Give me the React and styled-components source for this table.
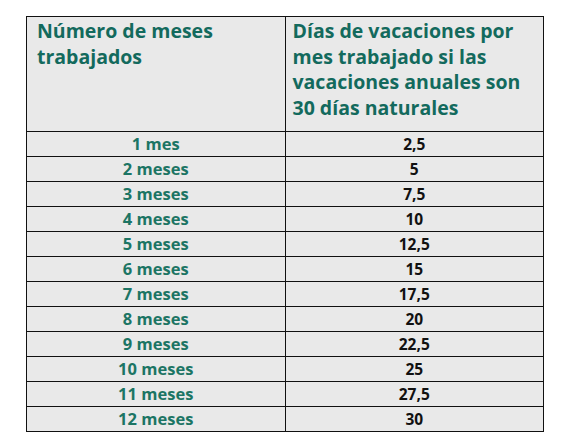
import React from 'react'
import styled, { createGlobalStyle } from 'styled-components'

const Global = createGlobalStyle`
  body {
    margin: 0;
    background: #ffffff;
    font-family: "Open Sans", "Noto Sans", sans-serif;
  }
`

const Page = styled.div`
  padding: 16px 0 0 26px;
`

const Table = styled.table`
  border-collapse: collapse;
  width: 518px;
  background: #e9e9e9;
  border: 1.5px solid #111;
`

const HeadCell = styled.th`
  width: ${props => props.w}px;
  height: 115px;
  box-sizing: border-box;
  padding: 1px 6px 0 ${props => props.pl}px;
  vertical-align: top;
  text-align: left;
  font-weight: 700;
  font-size: 19.5px;
  line-height: 25.6px;
  color: #136a5d;
  border: 1px solid #111;
`

const Cell = styled.td`
  height: 25px;
  box-sizing: border-box;
  padding: 0;
  text-align: center;
  vertical-align: middle;
  font-weight: 700;
  font-size: ${props => (props.num ? '15.5px' : '16.5px')};
  line-height: 20px;
  color: ${props => (props.num ? '#111' : '#1c7564')};
  border: 1px solid #111;
`

const rows = [
  ['1 mes', '2,5'],
  ['2 meses', '5'],
  ['3 meses', '7,5'],
  ['4 meses', '10'],
  ['5 meses', '12,5'],
  ['6 meses', '15'],
  ['7 meses', '17,5'],
  ['8 meses', '20'],
  ['9 meses', '22,5'],
  ['10 meses', '25'],
  ['11 meses', '27,5'],
  ['12 meses', '30'],
]

const App = () => {
  return (
    <>
      <Global />
      <Page>
        <Table>
          <thead>
            <tr>
              <HeadCell w={259} pl={10}>Número de meses trabajados</HeadCell>
              <HeadCell w={259} pl={7}>
                Días de vacaciones por mes trabajado si las vacaciones anuales son 30 días naturales
              </HeadCell>
            </tr>
          </thead>
          <tbody>
            {rows.map(([m, d]) => (
              <tr key={m}>
                <Cell>{m}</Cell>
                <Cell num>{d}</Cell>
              </tr>
            ))}
          </tbody>
        </Table>
      </Page>
    </>
  )
}

export default App
